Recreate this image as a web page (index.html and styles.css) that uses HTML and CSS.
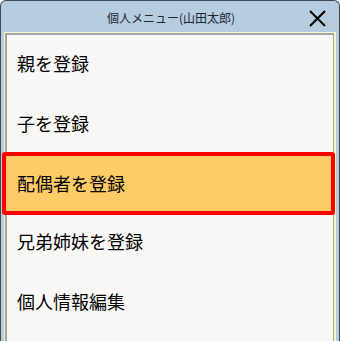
FILE: index.html
```html
<!DOCTYPE html>
<html lang="ja">
<head>
<meta charset="utf-8">
<title>個人メニュー</title>
<link rel="stylesheet" href="styles.css">
</head>
<body>
<div class="window">
  <div class="titlebar">
    <span class="title">個人メニュー(山田太郎)</span>
    <span class="close" aria-label="閉じる">
      <svg width="17" height="17" viewBox="0 0 17 17"><path d="M1 1 L16 16 M16 1 L1 16" stroke="#000" stroke-width="2" fill="none"/></svg>
    </span>
  </div>
  <div class="client">
    <div class="inner">
      <ul class="menu">
        <li class="item">親を登録</li>
        <li class="item">子を登録</li>
        <li class="item selected">配偶者を登録</li>
        <li class="item">兄弟姉妹を登録</li>
        <li class="item">個人情報編集</li>
      </ul>
    </div>
  </div>
</div>
</body>
</html>
```
FILE: styles.css
```css
html, body {
  margin: 0;
  padding: 0;
  background: #ffffff;
}
.window {
  width: 340px;
  height: 341px;
  box-sizing: border-box;
  border: 1px solid #3f4a55;
  border-bottom: none;
  border-radius: 6px 6px 0 0;
  background: #b6cce1;
  overflow: hidden;
  display: flex;
  flex-direction: column;
  font-family: "Noto Sans CJK JP", "Noto Sans", sans-serif;
}
.titlebar {
  height: 31px;
  flex: none;
  position: relative;
  display: flex;
  align-items: center;
  justify-content: center;
}
.title {
  font-size: 12px;
  color: #1b2633;
  margin-top: 1px;
  margin-left: 2px;
}
.close {
  position: absolute;
  right: 13px;
  top: 9px;
  width: 17px;
  height: 17px;
  display: block;
}
.close svg { display: block; }
.client {
  flex: 1;
  margin: 0 3px 0 3px;
  border-style: solid;
  border-color: #f7f7cc;
  border-width: 1px 2px 0 1px;
  display: flex;
  flex-direction: column;
}
.inner {
  flex: 1;
  border-style: solid;
  border-color: #a3a3a3;
  border-width: 2px 1px 0 2px;
  background: #f9f8f6;
}
.menu {
  list-style: none;
  margin: 0;
  padding: 0;
  display: flex;
  flex-direction: column;
}
.item {
  height: 60px;
  display: flex;
  align-items: center;
  padding-left: 10px;
  padding-bottom: 4px;
  font-size: 18px;
  color: #000;
  box-sizing: border-box;
}
.item.selected {
  position: relative;
  height: 63px;
  margin: -3px -2px -2px -5px;
  border: 4px solid #ff0000;
  border-radius: 3px;
  background: #fecb66;
  padding-left: 11px;
  padding-top: 0;
  padding-bottom: 2px;
}
```
